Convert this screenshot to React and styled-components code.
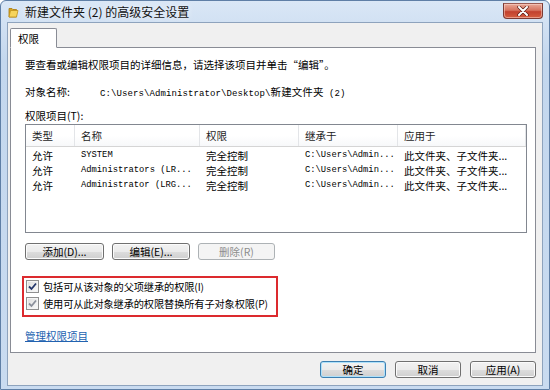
import React from 'react'
import styled, { createGlobalStyle } from 'styled-components'

const cjk = `"Noto Sans CJK SC", "Microsoft YaHei", sans-serif`
const mono = `"Liberation Mono", "Noto Sans CJK SC", monospace`

const GlobalStyle = createGlobalStyle`
  html, body { margin: 0; padding: 0; background: #fff; }
  body { font-family: ${cjk}; font-size: 10.5px; color: #000; }
  * { box-sizing: border-box; }
`

// window frame
const Window = styled.div`
  width: 550px;
  height: 390px;
  display: flex;
  flex-direction: column;
  background: linear-gradient(#dae7f6, #c3d7ee 60px, #c9dbf0);
  border: 1px solid #5f7fa6;
  border-radius: 6px 6px 0 0;
  padding: 0 6px 3px 6px;
`

const TitleBar = styled.div`
  height: 21px;
  display: flex;
  align-items: center;
  gap: 6px;
  padding-left: 1px;
`

const Title = styled.span`
  font-size: 12px;
  line-height: 14px;
  color: #111;
  text-shadow: 0 0 6px rgba(255, 255, 255, 0.9);
`

const CloseButton = styled.div`
  margin-left: auto;
  align-self: flex-start;
  margin-top: 2px;
  width: 40px;
  height: 16px;
  display: flex;
  align-items: center;
  justify-content: center;
  border: 1px solid #7b3a34;
  border-top-color: #9a5a52;
  border-radius: 0 0 4px 4px;
  background: linear-gradient(#e8a898, #d6735f 45%, #c2412e 55%, #d55d3f);
  box-shadow: inset 0 0 0 1px rgba(255, 220, 210, 0.5);
`

const Content = styled.div`
  flex: 1;
  display: flex;
  flex-direction: column;
  background: #f0f0f0;
  border: 1px solid #8ea3bd;
  padding: 5px 6px 0 2px;
`

// tabs
const TabStrip = styled.div`
  display: flex;
`

const Tab = styled.div`
  position: relative;
  z-index: 1;
  width: 47px;
  height: 20px;
  margin-bottom: -1px;
  padding-left: 7px;
  line-height: 19px;
  background: #fff;
  border: 1px solid #898c95;
  border-bottom: 1px solid #fff;
  border-radius: 2px 2px 0 0;
`

const Panel = styled.div`
  height: 306px;
  display: flex;
  flex-direction: column;
  background: #fff;
  border: 1px solid #898c95;
  padding: 0 14px;
`

const TextLine = styled.div`
  line-height: 14px;
  height: 14px;
  margin-top: ${p => p.$top}px;
  white-space: nowrap;
`

const ObjRow = styled.div`
  display: flex;
  align-items: center;
  height: 14px;
  margin-top: 12px;
  white-space: nowrap;
`

const ObjLabel = styled.span`
  width: 75px;
`

const ObjPath = styled.span`
  font-family: ${mono};
  font-size: 9px;
  letter-spacing: 0.1px;
`

const PathCjk = styled.span`
  font-family: ${cjk};
  font-size: 10.5px;
`

// list view
const List = styled.div`
  width: 502px;
  height: 109px;
  margin-top: 1px;
  border: 1px solid #828790;
  background: #fff;
  overflow: hidden;
`

const Columns = `49px 125px 99px 99px 1fr`

const Header = styled.div`
  display: grid;
  grid-template-columns: ${Columns};
  height: 22px;
  background: linear-gradient(#ffffff, #ffffff 50%, #f7f8fa);
  border-bottom: 1px solid #d5d5d5;
  margin-bottom: 1px;
`

const HeadCell = styled.div`
  padding-left: 6px;
  line-height: 21px;
  border-right: 1px solid #e3e5e8;
  color: #1e1e1e;
`

const Row = styled.div`
  display: grid;
  grid-template-columns: ${Columns};
  height: 15px;
  align-items: center;
`

const Cell = styled.div`
  padding-left: 6px;
  white-space: nowrap;
  overflow: hidden;
  font-family: ${p => (p.$mono ? mono : cjk)};
  font-size: ${p => (p.$mono ? '8.8px' : '10.5px')};
  line-height: 15px;
`

// buttons
const ButtonRow = styled.div`
  display: flex;
  gap: ${p => p.$gap || 8}px;
  margin-top: ${p => p.$top || 0}px;
  justify-content: ${p => (p.$end ? 'flex-end' : 'flex-start')};
`

const Button = styled.div`
  width: ${p => p.$w}px;
  height: 17px;
  display: flex;
  align-items: center;
  justify-content: center;
  font-size: 10.5px;
  line-height: 15px;
  border: 1px solid ${p => (p.$default ? '#3c7fb1' : p.$disabled ? '#adb2b5' : '#707070')};
  border-radius: 3px;
  color: ${p => (p.$disabled ? '#8d8d8d' : '#000')};
  background: ${p =>
    p.$disabled
      ? '#f4f4f4'
      : 'linear-gradient(#f2f2f2, #ebebeb 50%, #dddddd 51%, #cfcfcf)'};
  box-shadow: inset 0 0 0 1px ${p => (p.$default ? '#aee1fa' : p.$disabled ? '#f4f4f4' : '#fbfbfb')};
  white-space: nowrap;
`

// inherit options
const RedBox = styled.div`
  width: 256px;
  height: 41px;
  margin: 16px 0 0 -3px;
  border: 2px solid #dc2a2e;
  padding: 0 0 0 2px;
  display: flex;
  flex-direction: column;
`

const CheckRow = styled.div`
  display: flex;
  align-items: center;
  gap: 4px;
  height: 17px;
  font-size: 10.2px;
  letter-spacing: -0.1px;
  white-space: nowrap;
`

const CheckBox = styled.div`
  width: 13px;
  height: 13px;
  flex: none;
  border: 1px solid #8f8f8f;
  background: linear-gradient(135deg, #dcdcdc, #fbfbfb);
  display: flex;
  align-items: center;
  justify-content: center;
  box-shadow: inset 0 0 0 1px #f4f4f4;
`

const Link = styled.a`
  margin-top: 12px;
  line-height: 14px;
  color: #2262b0;
  text-decoration: underline;
  align-self: flex-start;
`

const FolderIcon = () => (
  <svg width="11" height="12" viewBox="0 0 11 12">
    <path d="M1 2.5 L4 2.5 L5 3.5 L8.5 3.5 L8.5 11 L1 11 Z" fill="#d9a521" stroke="#a8780c" strokeWidth="0.8" />
    <path d="M2.5 4.5 L10 4.5 L8.5 11 L1 11 Z" fill="#f6d45c" stroke="#c0901a" strokeWidth="0.8" />
  </svg>
)

const CloseGlyph = () => (
  <svg width="12" height="10" viewBox="0 0 12 10">
    <path d="M2 1 L10 9 M10 1 L2 9" stroke="#5a1e18" strokeWidth="3.4" strokeLinecap="round" />
    <path d="M2 1 L10 9 M10 1 L2 9" stroke="#ffffff" strokeWidth="2" strokeLinecap="round" />
  </svg>
)

const Check = ({ light }) => (
  <svg width="9" height="9" viewBox="0 0 9 9">
    <path d="M1 4.5 L3.5 7 L8 1.5" fill="none" stroke={light ? '#8a8f9a' : '#23366b'} strokeWidth="1.8" />
  </svg>
)

const rows = [
  ['允许', 'SYSTEM', '完全控制', 'C:\\Users\\Admin...', '此文件夹、子文件夹...'],
  ['允许', 'Administrators (LR...', '完全控制', 'C:\\Users\\Admin...', '此文件夹、子文件夹...'],
  ['允许', 'Administrator (LRG...', '完全控制', 'C:\\Users\\Admin...', '此文件夹、子文件夹...'],
]

const monoCols = [false, true, false, true, false]

const App = () => {
  return (
    <>
      <GlobalStyle />
      <Window>
        <TitleBar>
          <FolderIcon />
          <Title>新建文件夹 (2) 的高级安全设置</Title>
          <CloseButton><CloseGlyph /></CloseButton>
        </TitleBar>
        <Content>
          <TabStrip>
            <Tab>权限</Tab>
          </TabStrip>
          <Panel>
            <TextLine $top={10}>要查看或编辑权限项目的详细信息，请选择该项目并单击“编辑”。</TextLine>
            <ObjRow>
              <ObjLabel>对象名称:</ObjLabel>
              <ObjPath>C:\Users\Administrator\Desktop\<PathCjk>新建文件夹</PathCjk> (2)</ObjPath>
            </ObjRow>
            <TextLine $top={11}>权限项目(T):</TextLine>
            <List>
              <Header>
                <HeadCell>类型</HeadCell>
                <HeadCell>名称</HeadCell>
                <HeadCell>权限</HeadCell>
                <HeadCell>继承于</HeadCell>
                <HeadCell>应用于</HeadCell>
              </Header>
              {rows.map((r, i) => (
                <Row key={i}>
                  {r.map((c, j) => (
                    <Cell key={j} $mono={monoCols[j]}>{c}</Cell>
                  ))}
                </Row>
              ))}
            </List>
            <ButtonRow $top={10}>
              <Button $w={79}>添加(D)...</Button>
              <Button $w={78}>编辑(E)...</Button>
              <Button $w={77} $disabled>删除(R)</Button>
            </ButtonRow>
            <RedBox>
              <CheckRow>
                <CheckBox><Check /></CheckBox>
                包括可从该对象的父项继承的权限(I)
              </CheckRow>
              <CheckRow>
                <CheckBox><Check light /></CheckBox>
                使用可从此对象继承的权限替换所有子对象权限(P)
              </CheckRow>
            </RedBox>
            <Link href="#">管理权限项目</Link>
          </Panel>
          <ButtonRow $top={8} $gap={9} $end>
            <Button $w={66} $default>确定</Button>
            <Button $w={66}>取消</Button>
            <Button $w={66}>应用(A)</Button>
          </ButtonRow>
        </Content>
      </Window>
    </>
  )
}

export default App
